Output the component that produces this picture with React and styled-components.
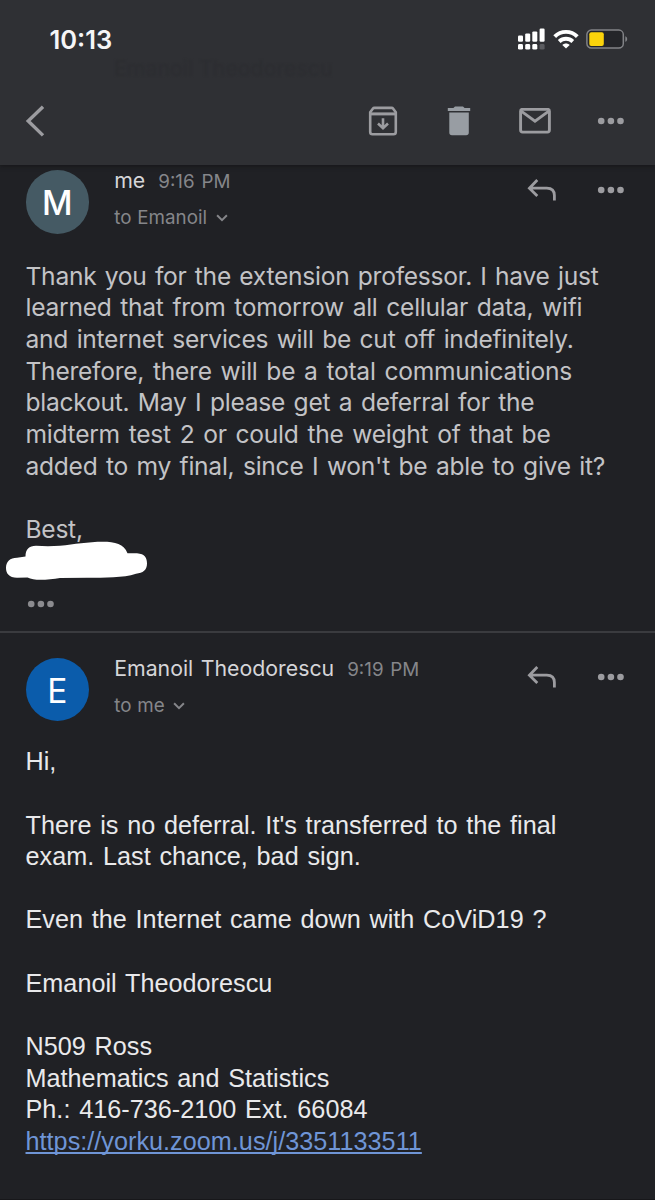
import React from 'react';
import styled, { createGlobalStyle } from 'styled-components';

const GlobalStyle = createGlobalStyle`
  * { box-sizing: border-box; }
  body { margin: 0; background: #202125; }
`;

const Screen = styled.main`
  width: 655px;
  height: 1200px;
  overflow: hidden;
  background: #202125;
  border-bottom: 1px solid #17171a;
  font-family: Inter, 'Liberation Sans', sans-serif;
  color: #c7c7ca;
`;

const Header = styled.header`
  position: relative;
  height: 165px;
  background: #2f3034;
  box-shadow: 0 1px 4px #151518;
`;

const StatusBar = styled.div`
  display: flex;
  align-items: center;
  justify-content: space-between;
  height: 78px;
  padding: 0 26px 0 49.5px;
`;

const Clock = styled.time`
  padding-top: 2px;
  font-size: 25.5px;
  font-weight: 600;
  line-height: 30px;
  color: #f5f5f7;
`;

const StatusIcons = styled.div`
  display: flex;
  align-items: center;
  gap: 7px;
`;

const Toolbar = styled.nav`
  display: flex;
  align-items: center;
  height: 85px;
  padding: 0 30px 0 25px;
`;

const ToolbarActions = styled.div`
  display: flex;
  align-items: center;
  margin-left: auto;
`;

const IconButton = styled.button`
  display: flex;
  align-items: center;
  justify-content: center;
  width: ${(p) => p.$width || 32}px;
  height: 32px;
  margin-left: ${(p) => p.$gap || 0}px;
  padding: 0;
  border: 0;
  background: none;
  color: ${(p) => p.$color || '#9c9ca0'};
  svg { display: block; flex: none; }
`;

const ScrolledBehind = styled.div`
  position: absolute;
  top: 55px;
  left: 114px;
  color: #2c2d31;
  font-size: 21.3px;
  line-height: 26px;
  filter: blur(1px);
`;

const Message = styled.article`
  height: ${(p) => p.$height}px;
  padding: ${(p) => p.$top}px 30.5px 0 25.5px;
  border-bottom: ${(p) => (p.$divided ? '2px solid #3a3b3f' : '0')};
`;

const MessageHeader = styled.div`
  display: flex;
  align-items: flex-start;
  height: ${(p) => p.$height}px;
`;

const Avatar = styled.div`
  display: flex;
  align-items: center;
  justify-content: center;
  width: 63.4px;
  height: 63.4px;
  margin-top: 2.9px;
  border-radius: 50%;
  background: ${(p) => p.$color};
  color: #fff;
  font-size: 33.5px;
  font-weight: ${(p) => p.$weight};
  line-height: 40px;
  padding-top: 2.5px;
`;

const Meta = styled.div`
  display: flex;
  flex-direction: column;
  gap: 13px;
  margin-left: 25.3px;
`;

const SenderRow = styled.div`
  display: flex;
  align-items: baseline;
  gap: 13px;
  height: 26px;
  line-height: 26px;
  white-space: nowrap;
`;

const Sender = styled.span`
  font-size: 21.3px;
  word-spacing: 1.5px;
  color: #d5d5d8;
`;

const Time = styled.span`
  font-size: 18.8px;
  word-spacing: 1.5px;
  color: #85868a;
`;

const Recipient = styled.div`
  display: flex;
  align-items: center;
  gap: 8.5px;
  height: 24px;
  font-size: 18.8px;
  line-height: 24px;
  word-spacing: 0.6px;
  color: #85868a;
`;

const MessageActions = styled.div`
  display: flex;
  margin: 6.3px 0 0 auto;
`;

const Body = styled.div`
  color: ${(p) => (p.$plain ? '#e9e9eb' : '#c3c3c6')};
  font-family: ${(p) => (p.$plain ? "'Liberation Sans', Arial, sans-serif" : 'Inter, sans-serif')};
  font-size: ${(p) => (p.$plain ? 25.2 : 24.6)}px;
  letter-spacing: ${(p) => (p.$plain ? 0.03 : -0.27)}px;
`;

const Line = styled.div`
  height: 31.65px;
  line-height: 31.65px;
  white-space: nowrap;
  word-spacing: ${(p) => p.$space ?? 1.7}px;
`;

const Link = styled.a`
  color: #6f95d6;
  text-decoration: underline;
  text-decoration-thickness: 2px;
  text-underline-offset: 2px;
  text-decoration-skip-ink: none;
`;

const Redaction = styled.svg`
  display: block;
  margin: -5px 0 0 -20.5px;
`;

const QuoteToggle = styled(IconButton)`
  margin-top: 6px;
`;

const Dots = () => (
  <svg width="28" height="8" viewBox="0 0 28 8" fill="currentColor">
    <circle cx="4.2" cy="4" r="3.3" />
    <circle cx="13.9" cy="4" r="3.3" />
    <circle cx="23.5" cy="4" r="3.3" />
  </svg>
);

const Signal = () => (
  <svg width="28" height="22" viewBox="0 0 28 22" fill="#fff">
    <rect x="0" y="7.4" width="5" height="6.3" rx="1.2" />
    <rect x="7.2" y="5.4" width="5" height="8.3" rx="1.2" />
    <rect x="14.3" y="3.4" width="5" height="10.3" rx="1.2" />
    <rect x="21.6" y="0.6" width="5" height="13.1" rx="1.2" />
    <rect x="0" y="16" width="5" height="5.6" rx="1.4" />
    <rect x="7.2" y="16" width="5" height="5.6" rx="1.4" />
    <rect x="14.3" y="16" width="5" height="5.6" rx="1.4" />
    <rect x="21.6" y="16" width="5" height="5.6" rx="1.4" fill="#5b5c60" />
  </svg>
);

const Wifi = () => (
  <svg width="26" height="20" viewBox="0 0 26 20" fill="none" stroke="#fff" strokeWidth="3.9">
    <path d="M1.7 7.7C8 1.3 18 1.3 24.3 7.7" />
    <path d="M6.2 12.5c3.9-3.7 9.7-3.7 13.6 0" />
    <path d="M9.3 15.9c2.1-2 5.3-2 7.4 0L13 19.6z" fill="#fff" stroke="none" />
  </svg>
);

const Battery = () => (
  <svg width="43" height="20" viewBox="0 0 43 20" fill="none">
    <rect x="0.9" y="1.1" width="36.4" height="18" rx="4.5" fill="#242529" stroke="#828387" strokeWidth="1.5" />
    <rect x="3.3" y="3.2" width="14.5" height="13.8" rx="2" fill="#fbd30b" />
    <path d="M39.3 7.2c2.5.8 2.5 4.8 0 5.6z" fill="#828387" />
  </svg>
);

const Back = () => (
  <svg width="20" height="32" viewBox="0 0 20 32" fill="none" stroke="currentColor" strokeWidth="3.4">
    <path d="M18 1.7 3.2 16 18 30.4" />
  </svg>
);

const Archive = () => (
  <svg width="30" height="30" viewBox="0 0 30 30" fill="none" stroke="currentColor" strokeWidth="2.6" strokeLinejoin="round">
    <path d="M2.2 6.2 4.8 2.7q.6-.8 1.6-.8h17.2q1 0 1.6.8l2.6 3.5V26q0 2.3-2.3 2.3h-21Q2.2 28.3 2.2 26z" />
    <path d="M2.2 7.9h25.6" strokeWidth="3" />
    <path d="M15 12.3v9M10 17.5l5 4.7 5-4.7" strokeLinejoin="miter" />
  </svg>
);

const Trash = () => (
  <svg width="24" height="30" viewBox="0 0 24 30" fill="currentColor">
    <path d="M.8 1.9h5.6L8 .5h8l1.6 1.4h5.6v3.2H.8zM2.3 6.6h19.5v19.9q0 2.7-2.7 2.7H5q-2.7 0-2.7-2.7z" />
  </svg>
);

const Mail = () => (
  <svg width="32" height="26" viewBox="0 0 32 26" fill="none" stroke="currentColor" strokeWidth="2.9">
    <rect x="1.6" y="1.3" width="28.8" height="22.8" rx="2" />
    <path d="m2.2 3.2 13.8 10 13.8-10" />
  </svg>
);

const Reply = () => (
  <svg width="30" height="24" viewBox="0 0 30 24" fill="none" stroke="currentColor" strokeWidth="2.8">
    <path d="M10.3 2 2.4 10.2l7.9 7.9M2.6 10.2h17.2q7.6 0 7.6 7.4v5" />
  </svg>
);

const ChevronDown = () => (
  <svg width="12" height="8" viewBox="0 0 12 8" fill="none" stroke="currentColor" strokeWidth="2">
    <path d="m1.1 1.3 4.9 4.8 4.9-4.8" />
  </svg>
);

function MessageTop({ initial, color, weight, sender, time, to, height }) {
  return (
    <MessageHeader $height={height}>
      <Avatar $color={color} $weight={weight}>{initial}</Avatar>
      <Meta>
        <SenderRow>
          <Sender>{sender}</Sender>
          <Time>{time}</Time>
        </SenderRow>
        <Recipient>
          <span>{to}</span>
          <ChevronDown />
        </Recipient>
      </Meta>
      <MessageActions>
        <IconButton aria-label="Reply"><Reply /></IconButton>
        <IconButton aria-label="More" $width={28} $gap={39}><Dots /></IconButton>
      </MessageActions>
    </MessageHeader>
  );
}

const request = [
  ['Thank you for the extension professor. I have just', 1.7],
  ['learned that from tomorrow all cellular data, wifi', 2.1],
  ['and internet services will be cut off indefinitely.', 1.9],
  ['Therefore, there will be a total communications', 2.2],
  ['blackout. May I please get a deferral for the', 1.9],
  ['midterm test 2 or could the weight of that be', 2.2],
  ["added to my final, since I won't be able to give it?", 1.9],
  [''],
  ['Best,'],
];

const answer = [
  'Hi,',
  '',
  "There is no deferral. It's transferred to the final",
  'exam. Last chance, bad sign.',
  '',
  'Even the Internet came down with CoViD19 ?',
  '',
  'Emanoil Theodorescu',
  '',
  'N509 Ross',
  'Mathematics and Statistics',
  'Ph.: 416-736-2100 Ext. 66084',
];

export default function App() {
  return (
    <>
      <GlobalStyle />
      <Screen>
        <Header>
          <ScrolledBehind aria-hidden="true">Emanoil Theodorescu</ScrolledBehind>
          <StatusBar>
            <Clock>10:13</Clock>
            <StatusIcons>
              <Signal />
              <Wifi />
              <Battery />
            </StatusIcons>
          </StatusBar>
          <Toolbar>
            <IconButton aria-label="Back" $width={20}><Back /></IconButton>
            <ToolbarActions>
              <IconButton aria-label="Archive"><Archive /></IconButton>
              <IconButton aria-label="Delete" $gap={44} $color="#989da3"><Trash /></IconButton>
              <IconButton aria-label="Mark unread" $gap={44}><Mail /></IconButton>
              <IconButton aria-label="More" $width={28} $gap={46}><Dots /></IconButton>
            </ToolbarActions>
          </Toolbar>
        </Header>

        <Message $height={468} $top={2.3} $divided>
          <MessageTop initial="M" color="#455a64" weight={500} sender="me" time="9:16 PM" to="to Emanoil" height={93.4} />
          <Body>
            {request.map(([text, space], i) => (
              <Line key={i} $space={space}>{text}</Line>
            ))}
          </Body>
          <Redaction width="144" height="42" viewBox="0 0 144 42" fill="#fff">
            <path d="M20.5 16.5C20.5 9 24 6 31 5.7L43 6.3C60 6 72 3 87 2.2C105 1.2 118 1.5 122.5 13.3L132 13.3C140 14 142 18 142 23.5C142 30 138 33 131 33.7C118 38 100 37.5 82 37.7L55 38C44 39.5 30 41.5 22.5 37.5L12 37.8C4 37.5 1 33.5 1 28C1 21.5 5 18 12 17.8Z" />
          </Redaction>
          <QuoteToggle aria-label="Show quoted text" $width={30} $color="#8b8b8f"><Dots /></QuoteToggle>
        </Message>

        <Message $height={566} $top={21.7}>
          <MessageTop initial="E" color="#0b5cab" weight={400} sender="Emanoil Theodorescu" time="9:19 PM" to="to me" height={91.6} />
          <Body $plain>
            {answer.map((text, i) => (
              <Line key={i}>{text}</Line>
            ))}
            <Line><Link href="#">https://yorku.zoom.us/j/3351133511</Link></Line>
          </Body>
        </Message>
      </Screen>
    </>
  );
}
